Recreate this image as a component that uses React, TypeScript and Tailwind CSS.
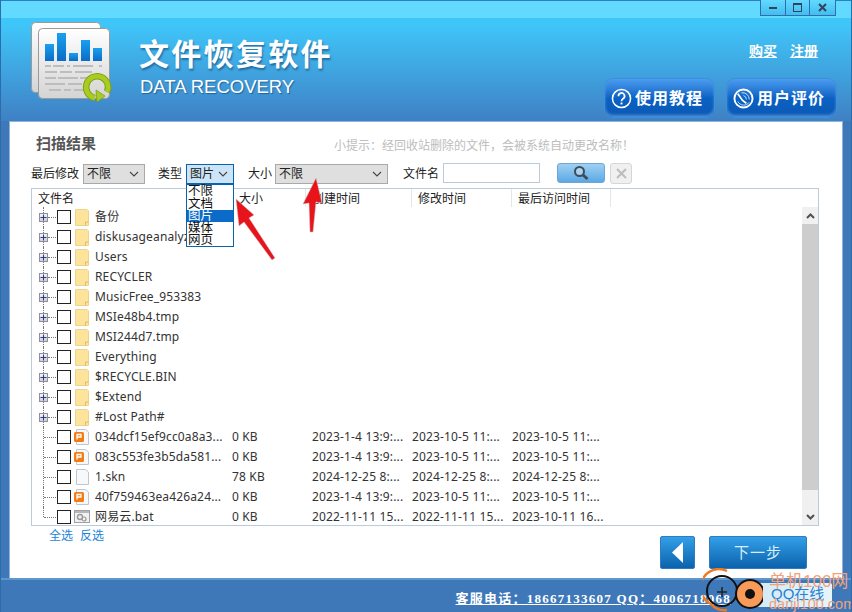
import React from "react";

const cjk = '"Noto Sans", "Noto Sans CJK SC", sans-serif';

function Logo() {
  return (
    <svg width="84" height="82" viewBox="0 0 84 82" className="shrink-0">
      <defs>
        <linearGradient id="sheet" x1="0" y1="0" x2="0" y2="1">
          <stop offset="0" stopColor="#ffffff" />
          <stop offset="1" stopColor="#d4d4d4" />
        </linearGradient>
        <linearGradient id="bar" x1="0" y1="0" x2="0" y2="1">
          <stop offset="0" stopColor="#1ba0ee" />
          <stop offset="1" stopColor="#0a6cc8" />
        </linearGradient>
      </defs>
      <rect x="1.5" y="1.5" width="69" height="70" rx="4" fill="url(#sheet)" stroke="#9a9a9a" />
      <rect x="8.5" y="7.5" width="71" height="70" rx="4" fill="url(#sheet)" stroke="#9a9a9a" />
      <rect x="15" y="23" width="9" height="17" fill="url(#bar)" />
      <rect x="27" y="12" width="9" height="28" fill="url(#bar)" />
      <rect x="39" y="32" width="9" height="8" fill="url(#bar)" />
      <rect x="51" y="19" width="9" height="21" fill="url(#bar)" />
      <rect x="63" y="27" width="9" height="13" fill="url(#bar)" />
      <g fill="#bdbdbd">
        <rect x="15" y="44" width="6" height="2" /><rect x="23" y="44" width="11" height="2" /><rect x="37" y="44" width="3" height="2" /><rect x="43" y="44" width="20" height="2" /><rect x="69" y="44" width="3" height="2" />
        <rect x="15" y="50" width="12" height="2" /><rect x="30" y="50" width="12" height="2" /><rect x="45" y="50" width="17" height="2" />
        <rect x="15" y="56" width="11" height="2" /><rect x="28" y="56" width="20" height="2" /><rect x="50" y="56" width="8" height="2" />
        <rect x="15" y="62" width="20" height="2" /><rect x="38" y="62" width="14" height="2" /><rect x="54" y="62" width="6" height="2" />
        <rect x="19" y="68" width="12" height="2" /><rect x="34" y="68" width="7" height="2" /><rect x="44" y="68" width="14" height="2" />
      </g>
      <path d="M77 71 A 11 11 0 1 0 65 77" fill="none" stroke="#7f9f14" strokeWidth="6.5" />
      <path d="M77 71 A 11 11 0 1 0 65 77" fill="none" stroke="#a8cc20" strokeWidth="4.5" />
      <path d="M66 69 L75 75 L67 81 Z" fill="#a8cc20" stroke="#7f9f14" strokeWidth="0.8" />
    </svg>
  );
}

function HelpIcon() {
  return (
    <svg width="21" height="21" viewBox="0 0 22 22" className="shrink-0">
      <circle cx="11" cy="11" r="9.5" fill="none" stroke="#fff" strokeWidth="1.6" />
      <path d="M7.8 8.6 A3.2 3.2 0 1 1 12.6 11.2 C11.4 12 11 12.4 11 14" fill="none" stroke="#fff" strokeWidth="1.8" />
      <rect x="10" y="15.2" width="2" height="2" fill="#fff" />
    </svg>
  );
}

function ReviewIcon() {
  return (
    <svg width="21" height="21" viewBox="0 0 22 22" className="shrink-0">
      <circle cx="11" cy="11" r="9.5" fill="none" stroke="#fff" strokeWidth="2" />
      <path d="M5 6 L10 13 L14 16" fill="none" stroke="#fff" strokeWidth="1.8" />
      <path d="M9 5 A7 7 0 0 1 17 12 M11 8 A4 4 0 0 1 14 12 M5 14 A7 7 0 0 0 17 15" fill="none" stroke="#cfe6fa" strokeWidth="1" />
    </svg>
  );
}

function HeaderButton({ icon, label }: { icon: React.ReactNode; label: string }) {
  return (
    <div className="flex h-[40px] w-[111px] items-center gap-[3px] overflow-hidden rounded-[9px] border border-[#3d8fdc] bg-gradient-to-b from-[#4b9df0] via-[#0a62c4] to-[#0c58b4] pl-[6px] text-white shadow-[inset_0_-2px_3px_rgba(130,190,240,0.55)]">
      {icon}
      <span className="text-[16px] font-bold leading-none tracking-[1px] text-white" style={{ fontFamily: cjk }}>{label}</span>
    </div>
  );
}

function FolderIcon() {
  return (
    <svg width="14" height="17" viewBox="0 0 14 17" className="shrink-0">
      <path d="M0.5 0.5 H12 L13.5 2 V16.5 H0.5 Z" fill="#fde49a" stroke="#ecd48c" />
      <path d="M10.5 16.5 V13 H13.5" fill="none" stroke="#dcbf66" />
    </svg>
  );
}

function FileIcon({ kind }: { kind: "p" | "doc" | "bat" }) {
  if (kind === "bat") {
    return (
      <svg width="16" height="14" viewBox="0 0 16 14" className="shrink-0">
        <rect x="0.5" y="0.5" width="15" height="12" fill="#f2f2f2" stroke="#a0a0a0" />
        <rect x="1" y="1" width="14" height="2" fill="#b8b8b8" />
        <circle cx="6" cy="7" r="2.5" fill="none" stroke="#9a9a9a" strokeWidth="1.4" />
        <circle cx="10" cy="9" r="2" fill="none" stroke="#9a9a9a" strokeWidth="1.2" />
      </svg>
    );
  }
  return (
    <svg width="16" height="16" viewBox="0 0 16 16" className="shrink-0">
      <path d="M2.5 0.5 H11.5 L14.5 3 V15.5 H2.5 Z" fill="#f7f8fa" stroke="#c2c6cc" />
      {kind === "p" && <rect x="0" y="3" width="10" height="10" rx="1.5" fill="#f47c12" />}
      {kind === "p" && <path d="M3 10.5 V5.5 H7 V8 H3" fill="none" stroke="#fff" strokeWidth="1.3" />}
    </svg>
  );
}

function Expander() {
  return (
    <div className="flex h-[9px] w-[9px] items-center justify-center border border-[#8f8f9f] bg-gradient-to-b from-[#f4f4f4] to-[#cfcfcf]">
      <svg width="7" height="7" viewBox="0 0 7 7"><path d="M0.5 3.5 H6.5 M3.5 0.5 V6.5" stroke="#2a3a8a" /></svg>
    </div>
  );
}

type Row = { name: string; icon?: "p" | "doc" | "bat"; size?: string; c?: string; m?: string; a?: string };

const rows: Row[] = [
  { name: "备份" },
  { name: "diskusageanalyzer" },
  { name: "Users" },
  { name: "RECYCLER" },
  { name: "MusicFree_953383" },
  { name: "MSIe48b4.tmp" },
  { name: "MSI244d7.tmp" },
  { name: "Everything" },
  { name: "$RECYCLE.BIN" },
  { name: "$Extend" },
  { name: "#Lost Path#" },
  { name: "034dcf15ef9cc0a8a3...", icon: "p", size: "0 KB", c: "2023-1-4 13:9:...", m: "2023-10-5 11:...", a: "2023-10-5 11:..." },
  { name: "083c553fe3b5da581...", icon: "p", size: "0 KB", c: "2023-1-4 13:9:...", m: "2023-10-5 11:...", a: "2023-10-5 11:..." },
  { name: "1.skn", icon: "doc", size: "78 KB", c: "2024-12-25 8:...", m: "2024-12-25 8:...", a: "2024-12-25 8:..." },
  { name: "40f759463ea426a24...", icon: "p", size: "0 KB", c: "2023-1-4 13:9:...", m: "2023-10-5 11:...", a: "2023-10-5 11:..." },
  { name: "网易云.bat", icon: "bat", size: "0 KB", c: "2022-11-11 15...", m: "2022-11-11 15...", a: "2023-10-11 16..." },
];

function TreeRow({ row, index }: { row: Row; index: number }) {
  const isFile = !!row.icon;
  const last = index === rows.length - 1;
  return (
    <div className="flex h-[20px] shrink-0 items-center text-[12px] tracking-[0.15px] text-[#333]">
      <div className="relative flex h-full w-[25px] shrink-0 items-center pl-[7px]">
        <div className={`absolute left-[11px] top-0 border-l border-dotted border-[#777] ${last ? "h-[10px]" : "h-[20px]"}`} />
        <div className={`absolute top-[10px] border-t border-dotted border-[#777] ${isFile ? "left-[12px] w-[12px]" : "left-[16px] w-[8px]"}`} />
        {!isFile && <div className="relative"><Expander /></div>}
      </div>
      <div className="h-[14px] w-[14px] shrink-0 border border-[#222] bg-white" />
      <div className={`flex w-[24px] shrink-0 items-center ${isFile ? "pl-[3px]" : "pl-[4px]"}`}>
        {isFile ? <FileIcon kind={row.icon!} /> : <FolderIcon />}
      </div>
      <div className="w-[137px] shrink-0 overflow-hidden whitespace-nowrap">{row.name}</div>
      <div className="w-[80px] shrink-0 whitespace-nowrap">{row.size}</div>
      <div className="w-[100px] shrink-0 whitespace-nowrap">{row.c}</div>
      <div className="w-[100px] shrink-0 whitespace-nowrap">{row.m}</div>
      <div className="w-[100px] shrink-0 whitespace-nowrap">{row.a}</div>
    </div>
  );
}

function Select({ value, width, active }: { value: string; width: string; active?: boolean }) {
  return (
    <div className={`flex h-[20px] items-center justify-between pl-[3px] pr-[5px] text-[12px] text-[#222] ${width} ${active ? "border border-[#0a64ad] bg-[#cce4f7]" : "border border-[#a9a9a9] bg-[#dfdfdf]"}`}>
      <span>{value}</span>
      <svg width="10" height="6" viewBox="0 0 10 6"><path d="M1 1 L5 5 L9 1" fill="none" stroke="#444" strokeWidth="1.1" /></svg>
    </div>
  );
}

export default function App() {
  return (
    <div className="relative flex h-[612px] w-[852px] flex-col overflow-hidden border-x border-[#2d6cab] bg-[#3f78b8]" style={{ fontFamily: cjk }}>
      {/* header */}
      <div className="relative h-[121px] shrink-0 bg-[linear-gradient(to_bottom,#3fc6f9_20%,#3f80c4_100%)]">
        <div className="h-[18px] border-t border-[#2d7fc0] bg-[#62d9ff]" />
        <div className="absolute right-[15px] top-0 flex h-[16px] border border-t-0 border-[#2f6ea8]">
          <div className="flex w-[24px] items-center justify-center bg-gradient-to-b from-[#62d9ff] to-[#41bdf0]"><div className="h-[2px] w-[8px] bg-[#33445a]" /></div>
          <div className="flex w-[25px] items-center justify-center border-x border-[#2f6ea8] bg-gradient-to-b from-[#62d9ff] to-[#41bdf0]"><div className="h-[9px] w-[9px] border border-t-2 border-[#33445a]" /></div>
          <div className="flex w-[25px] items-center justify-center bg-gradient-to-b from-[#62d9ff] to-[#41bdf0]">
            <svg width="9" height="9" viewBox="0 0 9 9"><path d="M1 1 L8 8 M8 1 L1 8" stroke="#33445a" strokeWidth="2" /></svg>
          </div>
        </div>
        <div className="flex items-start pl-[29px] pr-[14px] pt-[3px]">
          <Logo />
          <div className="ml-[25px] flex flex-col pt-[13px]">
            <div className="text-[30px] font-bold leading-[36px] tracking-[2.3px] text-white [text-shadow:1px_2px_2px_rgba(0,50,100,0.5)]" style={{ fontFamily: '"Noto Sans CJK SC", sans-serif' }}>文件恢复软件</div>
            <div className="mt-[7px] pl-[1px] text-[18.5px] leading-[20px] text-white [text-shadow:1px_1px_1px_rgba(0,50,100,0.5)]" style={{ fontFamily: '"Liberation Sans", sans-serif' }}>DATA RECOVERY</div>
          </div>
          <div className="ml-auto flex flex-col items-end">
            <div className="flex gap-[13px] pr-[19px] pt-[21px] text-[14px] font-bold leading-[18px] text-white underline">
              <span>购买</span><span>注册</span>
            </div>
            <div className="mt-[18px] flex gap-[11px]">
              <HeaderButton icon={<HelpIcon />} label="使用教程" />
              <HeaderButton icon={<ReviewIcon />} label="用户评价" />
            </div>
          </div>
        </div>
      </div>

      {/* panel */}
      <div className="relative mx-[8px] flex h-[457px] shrink-0 flex-col border border-b-0 border-[#8db4da] bg-white pl-[21px]">
        <div className="flex h-[42px] shrink-0 items-start">
          <div className="pl-[5px] pt-[11px] text-[15px] font-bold leading-[20px] text-[#555]">扫描结果</div>
          <div className="pl-[238px] pt-[15px] text-[12px] leading-[17px] text-[#bdbdbd]">小提示：经回收站删除的文件，会被系统自动更改名称！</div>
        </div>
        <div className="flex h-[24px] shrink-0 items-start text-[12px] leading-[20px] text-[#222]">
          <span className="w-[52px]">最后修改</span>
          <Select value="不限" width="w-[62px]" />
          <span className="ml-[13px] w-[28px]">类型</span>
          <div className="relative">
            <Select value="图片" width="w-[48px]" active />
            <div className="absolute left-0 top-[20px] z-10 flex w-[48px] flex-col border border-[#0a64ad] bg-white text-[12.5px] leading-[12px] text-[#111]">
              <div className="h-[12.5px] pl-[1px]">不限</div>
              <div className="h-[12.5px] pl-[1px]">文档</div>
              <div className="h-[12px] bg-[#0a6cc8] pl-[1px] text-white">图片</div>
              <div className="h-[12px] pl-[1px]">媒体</div>
              <div className="h-[12px] pl-[1px]">网页</div>
            </div>
          </div>
          <span className="ml-[14px] w-[27px]">大小</span>
          <Select value="不限" width="w-[113px]" />
          <span className="ml-[15px] w-[40px]">文件名</span>
          <div className="h-[20px] w-[97px] -translate-y-[1px] border border-[#b8cbdc] bg-white" />
          <div className="ml-[17px] flex h-[20px] w-[48px] -translate-y-[1px] items-center justify-center rounded-[3px] border border-[#6ea7d6] bg-gradient-to-b from-[#9fd0f4] to-[#5ba8e4]">
            <svg width="16" height="16" viewBox="0 0 16 16">
              <circle cx="6.5" cy="6.5" r="4.5" fill="#cfe4f4" fillOpacity="0.5" stroke="#3e4c58" strokeWidth="2" />
              <path d="M10 10 L14.5 14" stroke="#3e4c58" strokeWidth="3" />
            </svg>
          </div>
          <div className="ml-[5px] flex h-[21px] w-[22px] -translate-y-[1px] items-center justify-center rounded-[3px] border border-[#d6d6d6] bg-[#f0f0f0]">
            <svg width="11" height="11" viewBox="0 0 11 11"><path d="M1 1 L10 10 M10 1 L1 10" stroke="#bcbcbc" strokeWidth="2" /></svg>
          </div>
        </div>

        <div className="flex h-[338px] w-[788px] shrink-0 flex-col overflow-hidden border border-[#b9ccdb]">
          <div className="flex h-[18px] shrink-0 items-stretch text-[12px] leading-[18px] text-[#222]">
            <div className="w-[200px] shrink-0 pl-[6px] pt-[1px]">文件名</div>
            <div className="w-[73px] shrink-0 border-l border-[#e6e6e6] pl-[6px] pt-[1px]">大小</div>
            <div className="w-[106px] shrink-0 border-l border-[#e6e6e6] pl-[6px] pt-[1px]">创建时间</div>
            <div className="w-[100px] shrink-0 border-l border-[#e6e6e6] pl-[6px] pt-[1px]">修改时间</div>
            <div className="w-[100px] shrink-0 border-x border-[#e6e6e6] pl-[6px] pt-[1px]">最后访问时间</div>
          </div>
          <div className="flex min-h-0 flex-1">
            <div className="flex min-w-0 flex-1 flex-col overflow-hidden">
              {rows.map((r, i) => <TreeRow key={r.name} row={r} index={i} />)}
            </div>
            <div className="flex w-[16px] shrink-0 flex-col bg-[#f0f0f0]">
              <div className="flex h-[17px] shrink-0 items-center justify-center">
                <svg width="9" height="6" viewBox="0 0 9 6"><path d="M1 5 L4.5 1.5 L8 5" fill="none" stroke="#505050" strokeWidth="2" /></svg>
              </div>
              <div className="h-[266px] shrink-0 bg-[#cdcdcd]" />
              <div className="flex-1" />
              <div className="flex h-[17px] shrink-0 items-center justify-center">
                <svg width="9" height="6" viewBox="0 0 9 6"><path d="M1 1 L4.5 4.5 L8 1" fill="none" stroke="#505050" strokeWidth="2" /></svg>
              </div>
            </div>
          </div>
        </div>

        <div className="flex flex-1 items-start">
          <div className="flex gap-[7px] pl-[18px] pt-[1px] text-[12px] leading-[18px] text-[#1a84d8]">
            <span>全选</span><span>反选</span>
          </div>
          <div className="ml-auto flex gap-[14px] pr-[35px] pt-[10px]">
            <div className="flex h-[33px] w-[35px] items-center justify-center rounded-[2px] border border-[#2f7cc4] bg-gradient-to-b from-[#33a0e8] to-[#0a62ac]">
              <svg width="11" height="21" viewBox="0 0 11 21"><path d="M11 0 L0 10.5 L11 21 Z" fill="#fff" /></svg>
            </div>
            <div className="flex h-[33px] w-[98px] items-center justify-center rounded-[2px] border border-[#2f7cc4] bg-gradient-to-b from-[#33a0e8] to-[#0a62ac] text-[15px] tracking-[1px] text-[#d8eefc]">下一步</div>
          </div>
        </div>
      </div>

      {/* footer */}
      <div className="flex flex-1 items-start justify-end border-t-2 border-[#5d97cf] bg-[#3f78b8] pr-[120px] pt-[10px]">
        <span className="text-[13px] font-bold leading-[17px] tracking-[1.25px] text-white underline" style={{ fontFamily: '"Liberation Serif", "Noto Sans CJK SC", serif' }}>客服电话：18667133607 QQ：4006718068</span>
      </div>

      {/* arrows */}
      <svg width="852" height="612" viewBox="0 0 852 612" className="pointer-events-none absolute -left-px top-0 z-20">
        <path d="M236 199 L254 215 L249 218 L275 258 L272 260 L244 222 L239 226 Z" fill="#e8141c" stroke="#c8c8c8" strokeWidth="0.5" />
        <path d="M316 178 L322 203 L316 202 L313 232 L310 232 L309 203 L303 204 Z" fill="#e8141c" stroke="#c8c8c8" strokeWidth="0.5" />
      </svg>

      {/* watermark */}
      <div className="absolute bottom-[5px] right-[19px] z-20 h-[24px] w-[90px] rounded-[2px] bg-gradient-to-r from-[#cfe8f5] to-[#e6f5fc]" />
      <svg width="60" height="44" viewBox="0 0 60 44" className="absolute left-[702px] top-[568px] z-30">
        <path d="M24 3 A 18 18 0 0 0 8 36 A 18 18 0 0 0 24 42" fill="none" stroke="#f07a1e" strokeWidth="2.5" />
        <circle cx="19" cy="23" r="15" fill="none" stroke="#111" strokeWidth="2" />
        <path d="M14 24 H24 M19 19 V29" stroke="#222" strokeWidth="1.5" />
        <circle cx="47" cy="26" r="14" fill="#f89a58" stroke="#111" strokeWidth="2" />
        <circle cx="47" cy="26" r="5" fill="#111" />
      </svg>
      <div className="absolute left-[768px] top-[573px] z-30 flex flex-col whitespace-nowrap leading-none">
        <span className="h-[13px] text-[17px] leading-[17px] text-[#f4a078]" style={{ fontFamily: '"Liberation Sans", "Noto Sans CJK SC", sans-serif' }}>单机100网</span>
        <span className="h-[11px] pl-[2px] text-[15px] leading-[15px] text-[#2a80d0]" style={{ fontFamily: '"Liberation Sans", "Noto Sans CJK SC", sans-serif' }}>QQ在线</span>
        <span className="h-[14px] text-[14.5px] leading-[14px] text-[#f4a078]" style={{ fontFamily: '"Liberation Sans", sans-serif' }}>danji100.com</span>
      </div>
    </div>
  );
}
